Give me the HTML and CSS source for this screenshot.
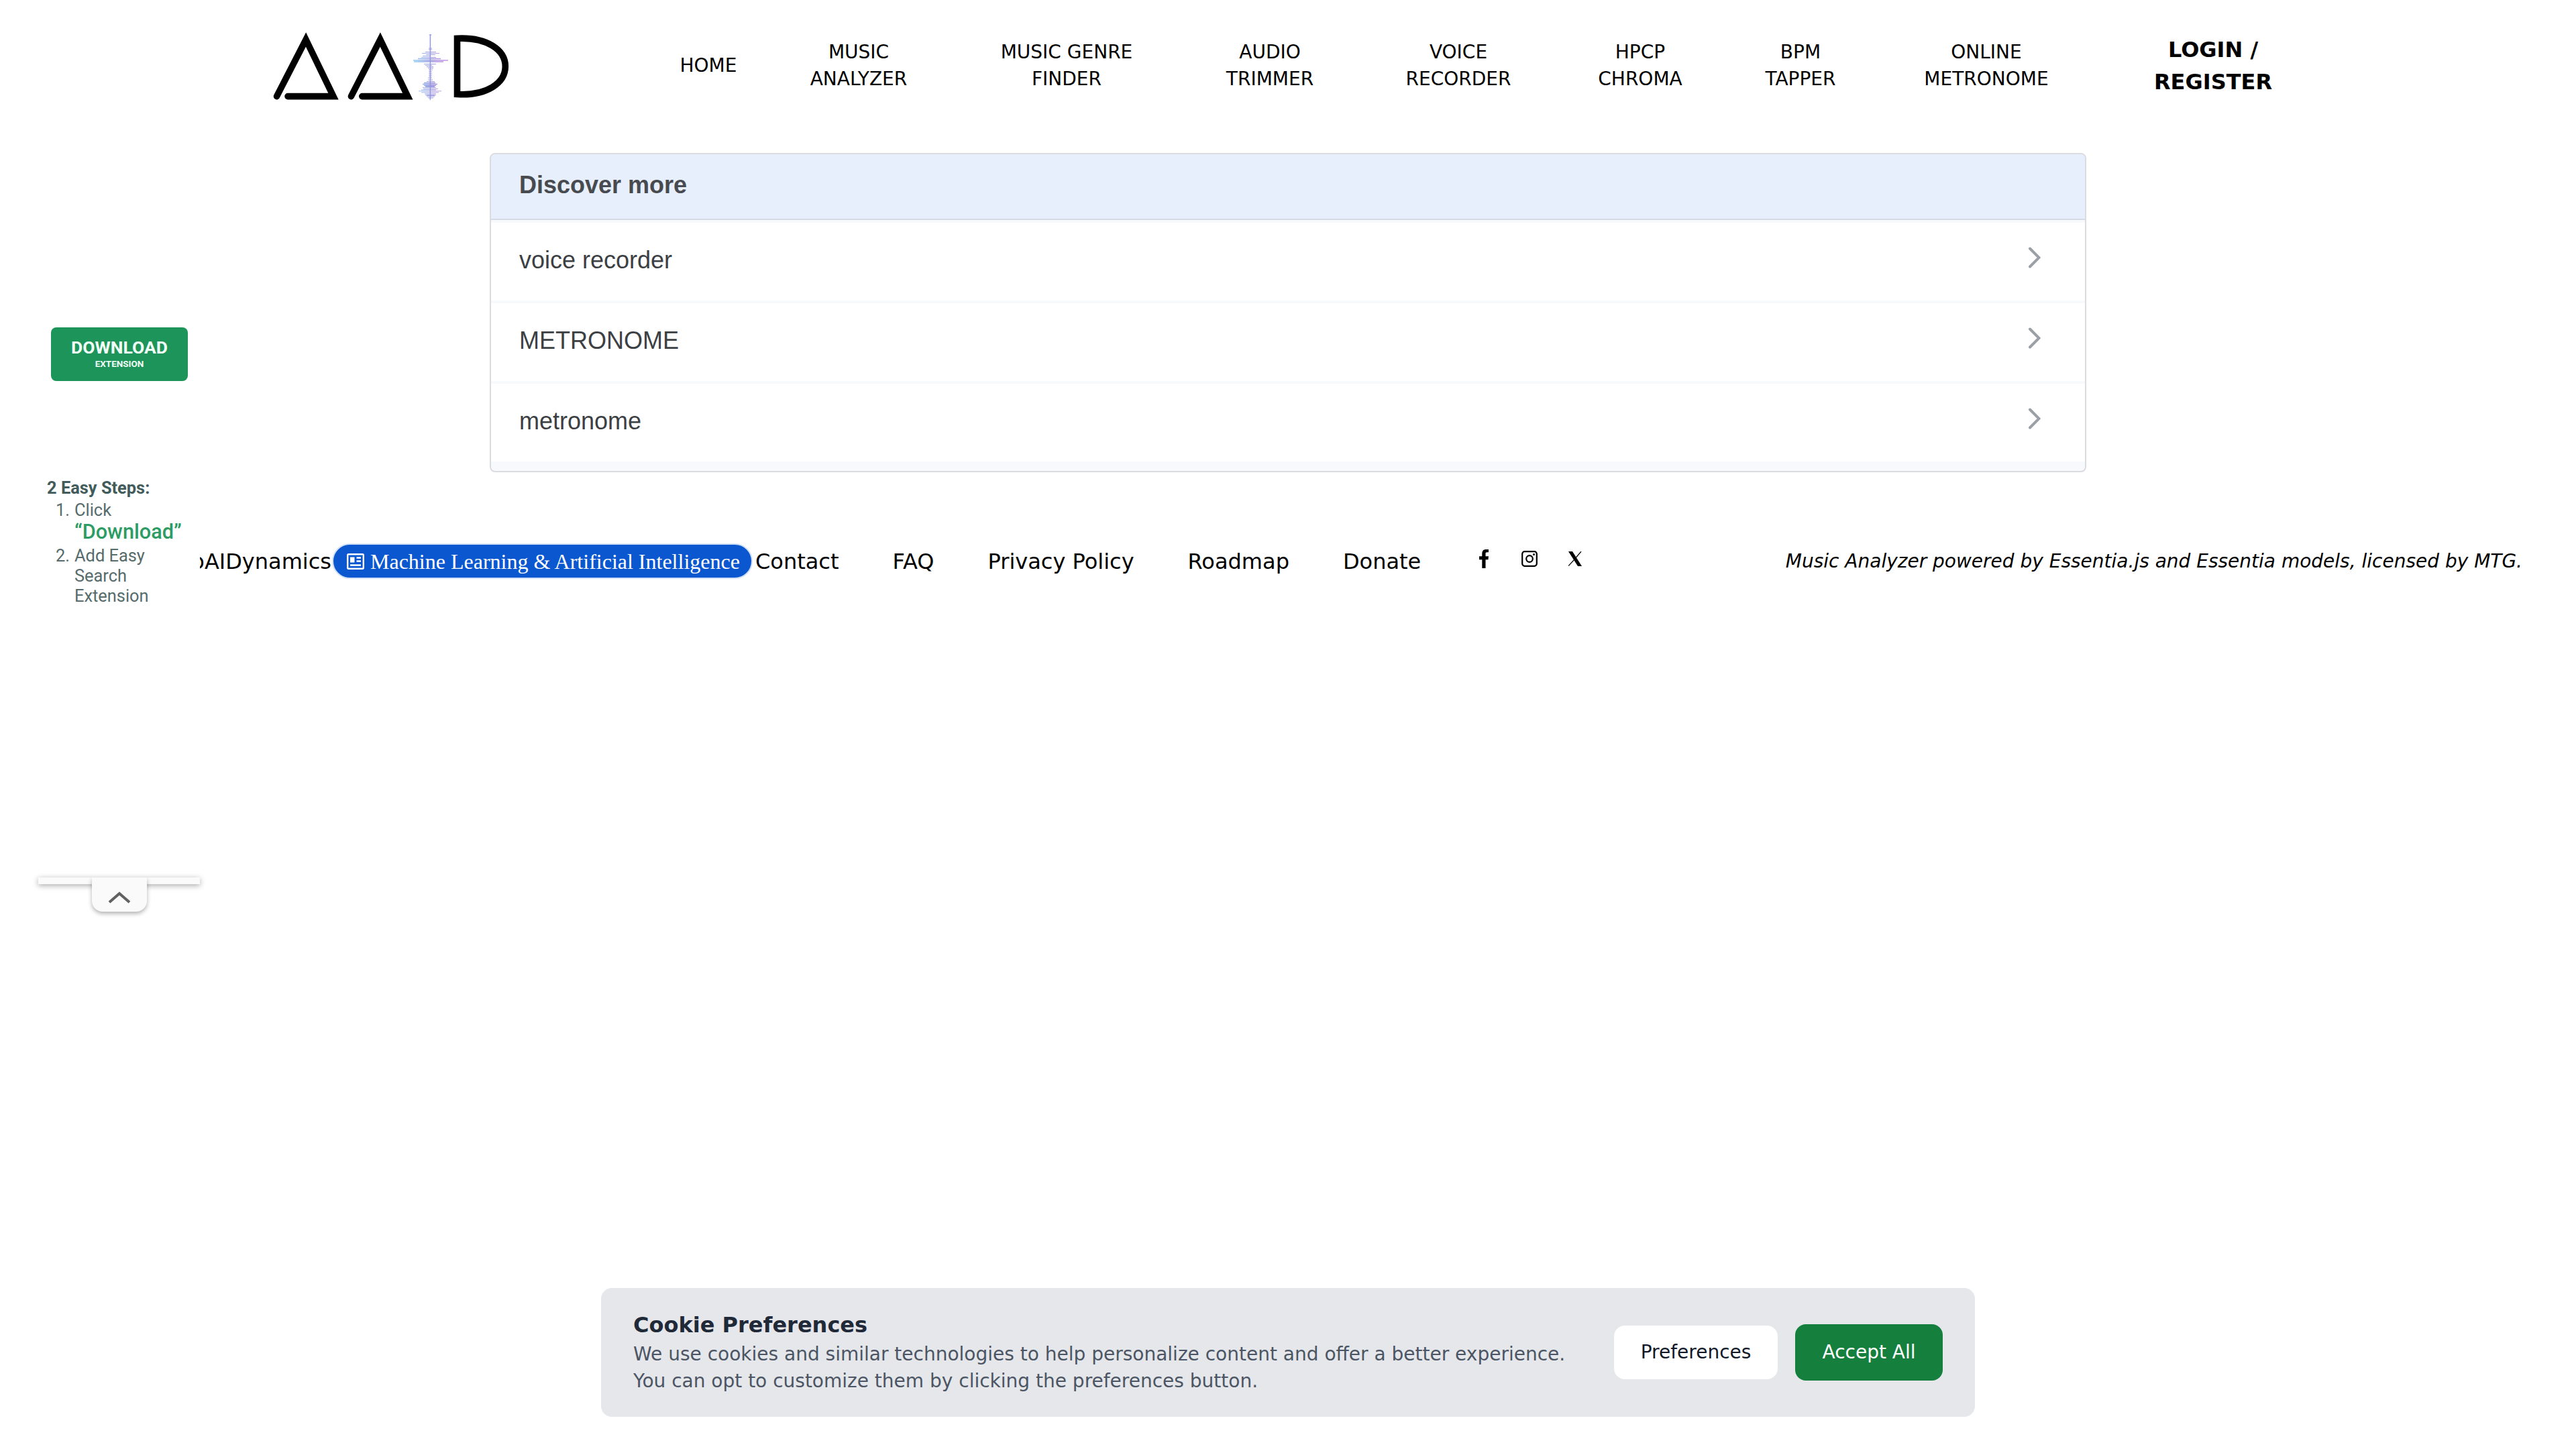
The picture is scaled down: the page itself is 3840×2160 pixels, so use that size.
FILE: index.html
```html
<!DOCTYPE html>
<html lang="en">
<head>
<meta charset="utf-8">
<title>AudioAIDynamics</title>
<link rel="stylesheet" href="styles.css">
</head>
<body>
<header class="header">
  <svg class="logo" viewBox="0 0 420 160" aria-label="AudioAIDynamics">
    <defs>
      <linearGradient id="wave" gradientUnits="userSpaceOnUse" x1="236" y1="0" x2="288" y2="0">
        <stop offset="0" stop-color="#7cc8f5"/><stop offset=".5" stop-color="#8585d8"/><stop offset="1" stop-color="#c87fdc"/>
      </linearGradient>
    </defs>
    <g fill="none" stroke="#000" stroke-width="9.6" stroke-miterlimit="10">
      <path stroke-linecap="round" d="M32.5 123.6L76 39l41 84.6H49"/>
      <path stroke-linecap="round" d="M143.4 123.6L186.8 39l41 84.6h-68"/>
      <path d="M301.5 37.3C345 35 373.3 54 373.3 79S345 123 301.5 120.5Z"/>
    </g>
    <g stroke="url(#wave)" fill="none" opacity=".85">
      <path stroke-width="1.500" d="M261.400 31v97.500l.2 0"/>
      <path stroke-width=".9" d="M259.500 32h4M259 52h5M259 54h5M254 57.500h16M249 59.500h26M255 61.500h14M250 63.500h12M248 65.500h22M252 75.500h18M254 77.500h10M256 79.500h10M258 81.500h8M259 84h6M259 87h5M259 90h5M259 93h5M258 96h6M258 99h7M256 101.500h12M250 110.500h20M251 112.500h22M248 114h22M244 115.800h34M248 117.800h26M253 119.800h17M254 121.800h16M256 124h12M258 126h8"/>
      <path stroke-width="1.500" d="M243 67.500h34M236 70h52M237 72h44M252 103.500h17M250 105.500h22M252 107.500h18M254 109h14M256 122h12"/>
    </g>
  </svg>
  <nav class="nav">
    <a>HOME</a>
    <a class="analyzer">MUSIC<br>ANALYZER</a>
    <a class="genre">MUSIC GENRE<br>FINDER</a>
    <a class="trimmer">AUDIO<br>TRIMMER</a>
    <a class="recorder">VOICE<br>RECORDER</a>
    <a class="chroma">HPCP<br>CHROMA</a>
    <a class="tapper">BPM<br>TAPPER</a>
    <a class="online">ONLINE<br>METRONOME</a>
    <a class="login">LOGIN /<br>REGISTER</a>
  </nav>
</header>

<main class="discover">
  <h2 class="discover-title">Discover more</h2>
  <a class="discover-row">voice recorder<svg class="chevron" viewBox="0 0 18 32"><path d="M2 2.500L15.500 16 2 29.500"/></svg></a>
  <a class="discover-row">METRONOME<svg class="chevron" viewBox="0 0 18 32"><path d="M2 2.500L15.500 16 2 29.500"/></svg></a>
  <a class="discover-row">metronome<svg class="chevron" viewBox="0 0 18 32"><path d="M2 2.500L15.500 16 2 29.500"/></svg></a>
</main>

<footer class="footer">
  <span class="brand">AudioAIDynamics</span>
  <a class="pill">
    <svg class="pill-icon" viewBox="0 0 26 24" fill="none" stroke="#fff" stroke-width="2.400"><rect x="1.200" y="1.200" width="23.600" height="21.600" rx="1.500"/><path d="M14.500 6.500H21M14.500 11.500H21M5 17.500h16"/><path fill="#fff" stroke="none" d="M5 5.500h6.500v8H5z"/></svg>
    Machine Learning &amp; Artificial Intelligence
  </a>
  <div class="links"><a>Contact</a><a>FAQ</a><a>Privacy Policy</a><a>Roadmap</a><a>Donate</a></div>
  <div class="social">
    <svg class="facebook" viewBox="0 0 14 28"><path d="M4.300 28V15.300H0V10.300h4.300V6.500C4.300 2 6.500 0 10.200 0H14v4.300h-2.400C10 4.300 9.500 5 9.500 6.600v3.700H14l-.6 5H9.500V28z"/></svg>
    <svg class="instagram" viewBox="0 0 24 24" fill="none" stroke="#000" stroke-width="2.200"><rect x="1.200" y="1.200" width="21.600" height="21.600" rx="3.500"/><circle cx="12" cy="12" r="4.800"/><circle cx="18.500" cy="5.500" r="1.600" fill="#000" stroke="none"/></svg>
    <svg class="xmark" viewBox="0 0 20 22"><path d="M0 0h6l14 22h-6z"/><path d="M19 0L11 9.500M8.500 12.500L0 21.500" stroke="#000" stroke-width="1.200"/></svg>
  </div>
  <p class="credit">Music Analyzer powered by Essentia.js and Essentia models, licensed by MTG.</p>
</footer>

<aside class="rail">
  <a class="download"><b>DOWNLOAD</b><small>EXTENSION</small></a>
  <div class="steps">
    <b>2 Easy Steps:</b>
    <div class="step"><span>1.</span><div>Click<br><strong>“Download”</strong></div></div>
    <div class="step"><span>2.</span><div>Add Easy<br>Search<br>Extension</div></div>
  </div>
  <div class="rail-edge"></div>
  <div class="rail-tab"><svg class="tab-arrow" viewBox="0 0 34 18"><path d="M2 16L17 3l15 13"/></svg></div>
</aside>

<section class="cookies">
  <div class="cookie-copy">
    <h3>Cookie Preferences</h3>
    <p>We use cookies and similar technologies to help personalize content and offer a better experience.<br>You can opt to customize them by clicking the preferences button.</p>
  </div>
  <button class="preferences">Preferences</button>
  <button class="accept">Accept All</button>
</section>
</body>
</html>
```
FILE: styles.css
```css
* { box-sizing: border-box; }
body { margin: 0; height: 2160px; position: relative; overflow: hidden; background: #fff; color: #000; font-family: "DejaVu Sans", sans-serif; }
h2, h3, p { margin: 0; }
svg { display: block; flex: none; }

.header { height: 192px; display: flex; align-items: center; padding-left: 380px; }
.logo { width: 420px; height: 160px; margin-top: 8px; }
.nav { display: flex; align-items: center; margin: 3px 0 0 156px; font-size: 28px; line-height: 40px; text-align: center; }
.nav a { width: 200px; flex: none; white-space: nowrap; }
.nav .analyzer { margin-left: 24px; }
.nav .genre { margin-left: 110px; }
.nav .trimmer { margin-left: 103px; }
.nav .recorder { margin-left: 81px; }
.nav .chroma { margin-left: 71px; }
.nav .tapper { margin-left: 39px; }
.nav .online { margin-left: 77px; }
.nav .login { margin-left: 138px; font-size: 32px; line-height: 48px; font-weight: 700; }

.discover { width: 2380px; height: 476px; margin: 36px auto 0; border: 2px solid #dadce0; border-radius: 8px; background: #f7f9fd; overflow: hidden; font-family: "Liberation Sans", Arial, sans-serif; font-size: 36px; color: #3c4043; }
.discover-title { height: 98px; padding: 24px 42px; border-bottom: 2px solid #d5dae3; background: #e8effc; color: #474a4f; font-size: 36px; line-height: 44px; }
.discover-row { height: 120px; display: flex; align-items: center; justify-content: space-between; padding: 0 66px 4px 42px; border-top: 4px solid #f8f9fa; background: #fff; }
.chevron { width: 18px; height: 32px; margin-bottom: 8px; fill: none; stroke: #9aa0a6; stroke-width: 4; stroke-linecap: round; }

.footer { display: flex; align-items: center; height: 53px; margin-top: 106px; font-size: 32px; line-height: 48px; white-space: nowrap; }
.brand { width: 494px; display: flex; justify-content: flex-end; }
.pill { width: 627px; height: 53px; margin-left: 1px; padding: 0 18px 0 20px; display: flex; align-items: center; gap: 9px; border: 2px solid #d2e0f8; border-radius: 27px; background: #0b57d0; color: #fff; font-family: "Liberation Serif", "Times New Roman", serif; }
.pill-icon { width: 26px; height: 24px; }
.links { display: flex; gap: 80px; margin-left: 4px; }
.social { display: flex; align-items: center; width: 153px; margin: -8px 0 0 87px; }
.facebook { width: 14px; height: 28px; }
.instagram { width: 24px; height: 24px; margin-left: 49px; }
.xmark { width: 20px; height: 22px; margin-left: 46px; }
.credit { margin-left: auto; padding: 1px 80px 0 0; font-size: 28px; font-style: italic; }

/* Collapsible side panel floating over the page */
.rail { position: absolute; left: 57px; top: 440px; width: 241px; height: 878px; padding-top: 48px; display: flex; flex-direction: column; background: #fff; font-family: Roboto, sans-serif; color: #566b6b; }
.download { width: 204px; height: 80px; margin-left: 19px; padding-top: 14px; display: flex; flex-direction: column; align-items: center; flex: none; border-radius: 8px; background: #1d9459; color: #f2fff8; }
.download b { font-size: 26.5px; line-height: 32px; }
.download small { font-size: 13.5px; line-height: 16px; font-weight: 700; }
.steps { margin: 143px 0 0 13px; font-size: 25.4px; line-height: 30px; white-space: nowrap; }
.steps > b { display: block; height: 34px; line-height: 33px; color: #425b5b; }
.step { display: flex; gap: 7px; padding-left: 13px; }
.step span { width: 21px; }
.step strong { display: inline-block; height: 38px; line-height: 36px; font-size: 30.7px; font-weight: 500; color: #2c9c64; }
.rail-edge { height: 10px; margin-top: auto; flex: none; background: #fafafa; box-shadow: 0 2px 8px rgba(0,0,0,.35); }
.rail-tab { position: absolute; left: 80px; top: 868px; width: 82px; height: 51px; padding-top: 21px; display: flex; justify-content: center; border-radius: 0 0 16px 16px; background: #fafafa; box-shadow: 0 3px 6px rgba(0,0,0,.3); clip-path: inset(0 -12px -12px -12px); }
.tab-arrow { width: 34px; height: 18px; fill: none; stroke: #616161; stroke-width: 4; }

/* Consent banner pinned over the page */
.cookies { position: absolute; left: 896px; bottom: 48px; width: 2048px; height: 192px; padding: 0 48px; display: flex; align-items: center; border-radius: 16px; background: #e5e7eb; }
.cookie-copy { flex: 1; margin-top: -2px; color: #4b5563; font-size: 28px; line-height: 40px; white-space: nowrap; }
.cookie-copy h3 { color: #1f2937; font-size: 32px; line-height: 48px; }
.cookies button { font: 28px/40px "DejaVu Sans", sans-serif; border: 0; border-radius: 16px; padding: 0; }
.cookies .preferences { width: 244px; height: 80px; background: #fff; color: #111827; }
.cookies .accept { width: 220px; height: 84px; margin-left: 26px; background: #15803d; color: #fff; }
```
